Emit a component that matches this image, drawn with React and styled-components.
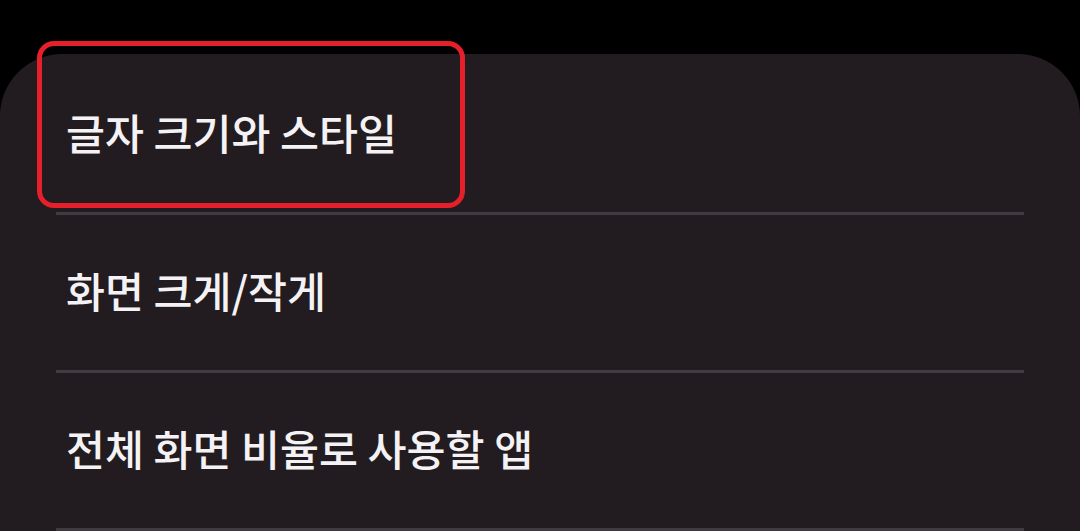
import React from "react";
import styled, { createGlobalStyle } from "styled-components";

const Global = createGlobalStyle`
  html, body {
    margin: 0;
    padding: 0;
    background: #000;
  }
  body {
    font-family: "Noto Sans CJK KR", "Noto Sans", sans-serif;
    overflow: hidden;
  }
`;

const Screen = styled.div`
  width: 1080px;
  height: 531px;
  background: #000;
  padding-top: 54px;
  box-sizing: border-box;
  overflow: hidden;
`;

const Card = styled.div`
  position: relative;
  background: #221c21;
  border-radius: 62px 62px 0 0;
  padding-top: 3px;
  height: 477px;
  box-sizing: border-box;
  display: flex;
  flex-direction: column;
`;

const Row = styled.div`
  height: 155px;
  display: flex;
  align-items: center;
  padding-left: 66px;
  padding-bottom: 4px;
  box-sizing: border-box;
`;

const Label = styled.span`
  color: #f4f2f4;
  font-size: 42.4px;
  font-weight: 500;
  line-height: 1.2;
`;

const Divider = styled.div`
  height: 3px;
  margin: 0 56px;
  background: #423a41;
  flex-shrink: 0;
`;

const Highlight = styled.div`
  position: absolute;
  left: 37px;
  top: -13px;
  width: 428px;
  height: 167px;
  border: 5px solid #e6202a;
  border-radius: 17px;
  box-sizing: border-box;
  pointer-events: none;
`;

const items = ["글자 크기와 스타일", "화면 크게/작게", "전체 화면 비율로 사용할 앱"];

export default function App() {
  return (
    <>
      <Global />
      <Screen>
        <Card>
          {items.map((t) => (
            <React.Fragment key={t}>
              <Row>
                <Label>{t}</Label>
              </Row>
              <Divider />
            </React.Fragment>
          ))}
          <Highlight />
        </Card>
      </Screen>
    </>
  );
}
